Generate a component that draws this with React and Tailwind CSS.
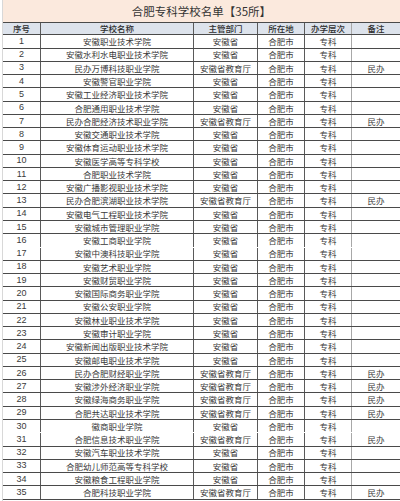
const rows = [
  ["安徽职业技术学院", 0],
  ["安徽水利水电职业技术学院", 0],
  ["民办万博科技职业学院", 1],
  ["安徽警官职业学院", 0],
  ["安徽工业经济职业技术学院", 0],
  ["合肥通用职业技术学院", 0],
  ["民办合肥经济技术职业学院", 1],
  ["安徽交通职业技术学院", 0],
  ["安徽体育运动职业技术学院", 0],
  ["安徽医学高等专科学校", 0],
  ["合肥职业技术学院", 0],
  ["安徽广播影视职业技术学院", 0],
  ["民办合肥滨湖职业技术学院", 1],
  ["安徽电气工程职业技术学院", 0],
  ["安徽城市管理职业学院", 0],
  ["安徽工商职业学院", 0],
  ["安徽中澳科技职业学院", 0],
  ["安徽艺术职业学院", 0],
  ["安徽财贸职业学院", 0],
  ["安徽国际商务职业学院", 0],
  ["安徽公安职业学院", 0],
  ["安徽林业职业技术学院", 0],
  ["安徽审计职业学院", 0],
  ["安徽新闻出版职业技术学院", 0],
  ["安徽邮电职业技术学院", 0],
  ["民办合肥财经职业学院", 1],
  ["安徽涉外经济职业学院", 1],
  ["安徽绿海商务职业学院", 1],
  ["合肥共达职业技术学院", 1],
  ["徽商职业学院", 0],
  ["合肥信息技术职业学院", 1],
  ["安徽汽车职业技术学院", 0],
  ["合肥幼儿师范高等专科学校", 0],
  ["安徽粮食工程职业学院", 0],
  ["合肥科技职业学院", 1],
];

const noLine = new Set([16, 30]);

const font = { fontFamily: '"Noto Sans CJK SC", "Noto Sans", sans-serif' };

export default function App() {
  return (
    <div
      className="w-[400px] h-[501px] bg-white overflow-hidden pl-[2px] text-[#3a3a3a]"
      style={font}
    >
      <div className="border-l border-[#d8d8d8] h-full">
        <div className="h-[22px] bg-[#fbe9dd] flex items-center justify-center text-[11.5px] text-[#333] leading-none pt-[2px]">
          合肥专科学校名单【35所】
        </div>
        <div className="h-[13.3px] bg-[#dde3ec] flex border-t border-b border-[#4a4a4a] text-[8.5px] leading-none font-medium text-[#2f2f2f]">
          <div className="w-[38px] flex items-center justify-center border-r border-[#5a5a5a]">序号</div>
          <div className="w-[153px] flex items-center justify-center border-r border-[#5a5a5a]">学校名称</div>
          <div className="w-[64px] flex items-center justify-center border-r border-[#5a5a5a]">主管部门</div>
          <div className="w-[47px] flex items-center justify-center border-r border-[#5a5a5a]">所在地</div>
          <div className="w-[47px] flex items-center justify-center border-r border-[#a8a8a8]">办学层次</div>
          <div className="flex-1 flex items-center justify-center">备注</div>
        </div>
        {rows.map(([name, priv], i) => (
          <div
            key={i}
            className={
              "h-[13.28px] flex text-[8.5px] leading-none border-b " +
              (noLine.has(i + 1) ? "border-transparent" : "border-[#4a4a4a]")
            }
          >
            <div
              className="w-[38px] flex items-center justify-center border-r border-[#5a5a5a] text-[9px]"
              style={{ fontFamily: '"Liberation Sans", sans-serif' }}
            >
              {i + 1}
            </div>
            <div className="w-[153px] flex items-center justify-center border-r border-[#5a5a5a]">{name}</div>
            <div className="w-[64px] flex items-center justify-center border-r border-[#5a5a5a]">
              {priv ? "安徽省教育厅" : "安徽省"}
            </div>
            <div className="w-[47px] flex items-center justify-center border-r border-[#5a5a5a]">合肥市</div>
            <div className="w-[47px] flex items-center justify-center border-r border-[#a8a8a8]">专科</div>
            <div className="flex-1 flex items-center justify-center">{priv ? "民办" : ""}</div>
          </div>
        ))}
      </div>
    </div>
  );
}
